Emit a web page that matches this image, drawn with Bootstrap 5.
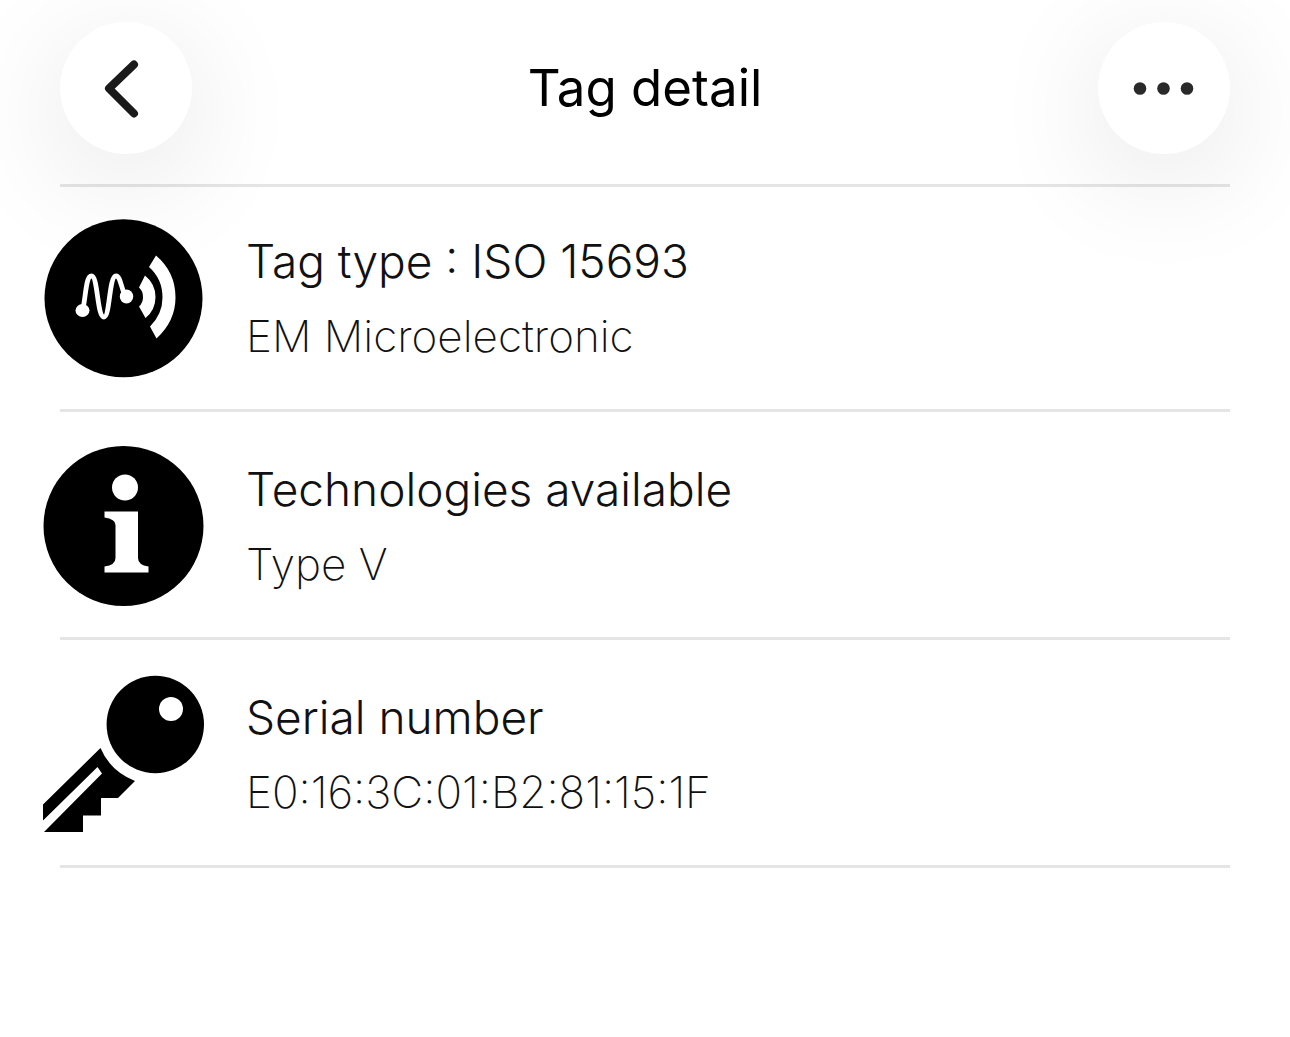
<!DOCTYPE html>
<html lang="en">
<head>
<meta charset="utf-8">
<meta name="viewport" content="width=device-width, initial-scale=1">
<title>Tag detail</title>
<link rel="stylesheet" href="https://cdn.jsdelivr.net/npm/bootstrap@5.3.0/dist/css/bootstrap.min.css">
<style>
body{font-family:Inter,"Liberation Sans",sans-serif;background:#fff;color:#111}
.page{padding:0 60px}
.top-bar{padding:22px 0 30px}
.round-btn{width:132px;height:132px;background:#fff;border:0;box-shadow:0 24px 120px rgba(0,0,0,.11)}
.page-title{font-size:51px;line-height:64px;font-weight:400;color:#000}
.tag-list{border-top:3px solid #e5e5e5}
.tag-row{padding:34px 0 31px;gap:42px;border-bottom:3px solid #e5e5e5}
.tag-row:first-child{padding-top:31px}
.tag-icon{width:161px;height:160px;margin-left:-17px}
.row-title{font-size:46px;line-height:60px;font-weight:300;margin:0 0 15px}
.row-sub{font-size:44px;line-height:60px;font-weight:200;margin:0}
</style>
<script src="https://cdn.jsdelivr.net/npm/bootstrap@5.3.0/dist/js/bootstrap.bundle.min.js"></script>
</head>
<body>
<div class="page">
  <header class="top-bar d-flex align-items-center justify-content-between">
    <button type="button" class="round-btn rounded-circle p-0" aria-label="Back">
      <svg class="d-block" width="132" height="132" viewBox="0 0 132 132" fill="none" stroke="#1a1a1a" stroke-width="8" stroke-linecap="round" stroke-linejoin="round"><path d="M74 42.500L49 66.500L74 91.500"/></svg>
    </button>
    <h1 class="page-title m-0">Tag detail</h1>
    <button type="button" class="round-btn rounded-circle p-0" aria-label="More options">
      <svg class="d-block" width="132" height="132" viewBox="0 0 132 132" fill="#2a2a2a"><circle cx="42" cy="66.500" r="6.300"/><circle cx="65.500" cy="66.500" r="6.300"/><circle cx="89" cy="66.500" r="6.300"/></svg>
    </button>
  </header>
  <main>
    <ul class="tag-list list-unstyled m-0">
      <li class="tag-row d-flex align-items-center">
        <svg class="tag-icon flex-shrink-0" viewBox="43 218 161 160" aria-hidden="true">
          <circle cx="123.500" cy="298.300" r="79"/>
          <path d="M83 309C86 294 86 276 91.500 276C98 276 97 317 104 317C110 317 109 276 116 276C120 276 121 286 124 293" fill="none" stroke="#fff" stroke-width="4.800"/>
          <ellipse cx="82.500" cy="310.500" rx="7" ry="6.500" fill="#fff"/>
          <ellipse cx="126.500" cy="296.500" rx="6.700" ry="7" fill="#fff"/>
          <path d="M145 275.500Q155.500 284 155.500 297Q155.500 310 145.500 318L139 306.500Q143 303 143 297Q143 291 139 287.500Z" fill="#fff"/>
          <path d="M156 255.500Q175.500 272 175.500 297.500Q175.500 321 156.500 338.500L150 326.500Q162.500 314 162.500 297.500Q162.500 279 149 267Z" fill="#fff"/>
        </svg>
        <div><h2 class="row-title">Tag type : ISO 15693</h2><p class="row-sub">EM Microelectronic</p></div>
      </li>
      <li class="tag-row d-flex align-items-center">
        <svg class="tag-icon flex-shrink-0" viewBox="43 446 161 160" aria-hidden="true">
          <circle cx="123.500" cy="526" r="80"/>
          <circle cx="125" cy="487.500" r="13" fill="#fff"/>
          <path d="M104.500 511.500H138V558Q138 565 148.500 566.500V572.500H104.500V566.500Q115.500 565 115.500 558V525Q115.500 519 104.500 517.500Z" fill="#fff"/>
        </svg>
        <div><h2 class="row-title">Technologies available</h2><p class="row-sub">Type V</p></div>
      </li>
      <li class="tag-row d-flex align-items-center">
        <svg class="tag-icon flex-shrink-0" viewBox="43 674 161 160" aria-hidden="true">
          <circle cx="155.300" cy="724.500" r="48.700"/>
          <circle cx="171" cy="709" r="12" fill="#fff"/>
          <path d="M100.500 748Q110 771 135 781L118 798H101V815.500H83V832H44L102 773.500L97.500 767L43 820.500V804.500Z"/>
        </svg>
        <div><h2 class="row-title">Serial number</h2><p class="row-sub">E0:16:3C:01:B2:81:15:1F</p></div>
      </li>
    </ul>
  </main>
</div>
</body>
</html>
